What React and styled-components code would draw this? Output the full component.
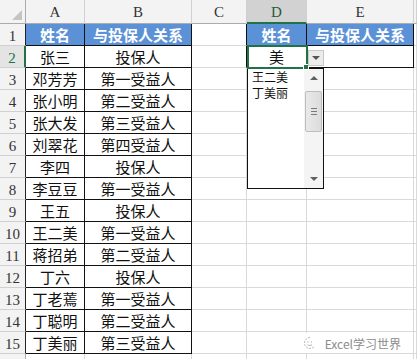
import React from 'react'
import styled, { createGlobalStyle, css } from 'styled-components'

const GlobalStyle = createGlobalStyle`
  html, body {
    margin: 0;
    padding: 0;
    background: #fff;
    overflow: hidden;
  }
  body {
    font-family: "Noto Sans CJK SC", "Liberation Sans", sans-serif;
  }
`

const GRID = '#d9d9d9'
const GREEN = '#217346'
const BLUE = '#5b91d6'

const Sheet = styled.div`
  position: relative;
  display: grid;
  grid-template-columns: 26px 59px 107px 55px 60px 107px 1fr;
  grid-template-rows: 24px repeat(16, 22px);
  width: 417px;
  height: 359px;
  overflow: hidden;
`

const Corner = styled.div`
  position: relative;
  background: #f3f3f3;
  border-right: 1px solid #ababab;
  border-bottom: 1px solid #ababab;
  box-sizing: border-box;

  &::after {
    content: '';
    position: absolute;
    right: 3px;
    bottom: 3px;
    border-style: solid;
    border-width: 0 0 10px 10px;
    border-color: transparent transparent #c4c4c4 transparent;
  }
`

const ColHeader = styled.div`
  display: flex;
  align-items: center;
  justify-content: center;
  box-sizing: border-box;
  background: ${p => (p.$active ? '#d2d2d2' : '#f3f3f3')};
  color: ${p => (p.$active ? '#1d5c3a' : '#333')};
  border-right: 1px solid #d0d0d0;
  border-bottom: ${p => (p.$active ? `2px solid ${GREEN}` : '1px solid #ababab')};
  font-family: "Liberation Serif", "DejaVu Serif", serif;
  font-size: 15px;
  padding-top: 2px;
`

const RowHeader = styled.div`
  display: flex;
  align-items: center;
  justify-content: center;
  box-sizing: border-box;
  background: ${p => (p.$active ? '#e4e4e4' : '#f3f3f3')};
  color: ${p => (p.$active ? GREEN : '#333')};
  border-bottom: 1px solid #d0d0d0;
  border-right: ${p => (p.$active ? `2px solid ${GREEN}` : p.$table ? '1px solid #222' : '1px solid #ababab')};
  font-family: "Liberation Serif", "DejaVu Serif", serif;
  font-size: 15px;
  padding-top: 3px;
`

const Cell = styled.div`
  position: relative;
  display: flex;
  align-items: center;
  justify-content: center;
  box-sizing: border-box;
  font-size: 15px;
  color: #111;
  white-space: nowrap;
  border-right: 1px solid ${p => (p.$black || p.$edge ? '#111' : GRID)};
  border-bottom: 1px solid ${p => (p.$black ? '#111' : GRID)};
  ${p =>
    p.$head &&
    css`
      background: ${BLUE};
      color: #fff;
      font-weight: 700;
    `}
`

const ActiveFrame = styled.div`
  position: absolute;
  left: 0;
  top: -1px;
  width: 61px;
  height: 24px;
  box-sizing: border-box;
  border: 2px solid ${GREEN};
  z-index: 4;
  pointer-events: none;

  &::after {
    content: '';
    position: absolute;
    right: -3px;
    bottom: -3px;
    width: 4px;
    height: 4px;
    background: ${GREEN};
    border: 1px solid #fff;
  }
`

const DropButton = styled.div`
  position: absolute;
  left: 61px;
  top: 4px;
  width: 16px;
  height: 16px;
  box-sizing: border-box;
  background: #ececec;
  border: 1px solid #c8c8c8;
  display: flex;
  align-items: center;
  justify-content: center;
  z-index: 5;

  &::before {
    content: '';
    border-style: solid;
    border-width: 4px 4px 0 4px;
    border-color: #555 transparent transparent transparent;
  }
`

const ListBox = styled.div`
  position: absolute;
  left: 0;
  top: 22px;
  width: 77px;
  height: 121px;
  box-sizing: border-box;
  background: #fff;
  border: 1px solid #111;
  display: flex;
  z-index: 3;
`

const Items = styled.div`
  flex: 1;
  padding: 0 0 0 4px;
  display: flex;
  flex-direction: column;
  align-items: flex-start;
  justify-content: flex-start;
`

const Item = styled.div`
  font-size: 12px;
  line-height: 16px;
  color: #111;
`

const ScrollBar = styled.div`
  width: 19px;
  background: #f4f4f4;
  display: flex;
  flex-direction: column;
  align-items: center;
`

const Arrow = styled.div`
  height: 18px;
  width: 19px;
  display: flex;
  align-items: center;
  justify-content: center;

  &::before {
    content: '';
    border-style: solid;
    border-width: ${p => (p.$down ? '4px 4px 0 4px' : '0 4px 4px 4px')};
    border-color: ${p =>
      p.$down ? '#606060 transparent transparent transparent' : 'transparent transparent #606060 transparent'};
  }
`

const Thumb = styled.div`
  width: 17px;
  height: 41px;
  margin-top: 4px;
  box-sizing: border-box;
  border: 1px solid #bdbdbd;
  border-radius: 2px;
  background: linear-gradient(to right, #e9e9e9, #dcdcdc);
  display: flex;
  flex-direction: column;
  align-items: center;
  justify-content: center;
  gap: 2px;
`

const Grip = styled.span`
  display: block;
  width: 6px;
  height: 1px;
  background: #7a7a7a;
`

const Spacer = styled.div`
  flex: 1;
`

const Watermark = styled.div`
  position: absolute;
  right: 10px;
  bottom: 6px;
  height: 20px;
  padding: 0 6px 0 6px;
  display: flex;
  align-items: center;
  gap: 8px;
  background: rgba(255, 255, 255, 0.9);
  color: #8c8c8c;
  font-size: 12px;
  z-index: 6;
`

const rows = [
  ['姓名', '与投保人关系'],
  ['张三', '投保人'],
  ['邓芳芳', '第一受益人'],
  ['张小明', '第二受益人'],
  ['张大发', '第三受益人'],
  ['刘翠花', '第四受益人'],
  ['李四', '投保人'],
  ['李豆豆', '第一受益人'],
  ['王五', '投保人'],
  ['王二美', '第一受益人'],
  ['蒋招弟', '第二受益人'],
  ['丁六', '投保人'],
  ['丁老蔫', '第一受益人'],
  ['丁聪明', '第二受益人'],
  ['丁美丽', '第三受益人'],
  ['', ''],
]

const WeChatIcon = () => (
  <svg width="14" height="14" viewBox="0 0 14 14" fill="none" stroke="#b5b5b5" strokeWidth="1">
    <path d="M7 1.5a5.5 5.5 0 1 0 3.9 9.4" strokeDasharray="2 1.2" />
    <circle cx="5" cy="6" r="0.7" fill="#b5b5b5" stroke="none" />
    <circle cx="8.5" cy="6" r="0.7" fill="#b5b5b5" stroke="none" />
    <path d="M4.5 8.8q2.3 1.6 4.6 0" />
  </svg>
)

const Dropdown = () => (
  <>
    <ActiveFrame />
    <DropButton />
    <ListBox>
      <Items>
        <Item>王二美</Item>
        <Item>丁美丽</Item>
      </Items>
      <ScrollBar>
        <Arrow />
        <Thumb>
          <Grip />
          <Grip />
          <Grip />
        </Thumb>
        <Spacer />
        <Arrow $down />
      </ScrollBar>
    </ListBox>
  </>
)

export default function App() {
  return (
    <>
      <GlobalStyle />
      <Sheet>
        <Corner />
        <ColHeader>A</ColHeader>
        <ColHeader>B</ColHeader>
        <ColHeader>C</ColHeader>
        <ColHeader $active>D</ColHeader>
        <ColHeader>E</ColHeader>
        <ColHeader />
        {rows.map(([name, rel], i) => {
          const r = i + 1
          const inTable = r <= 15
          const inSide = r <= 2
          return (
            <React.Fragment key={r}>
              <RowHeader $active={r === 2} $table={inTable}>{r <= 15 ? r : ''}</RowHeader>
              <Cell $black={inTable} $head={r === 1}>{name}</Cell>
              <Cell $black={inTable} $head={r === 1}>{rel}</Cell>
              <Cell $edge={inSide} />
              <Cell $black={inSide} $head={r === 1}>
                {r === 1 ? '姓名' : r === 2 ? '美' : ''}
                {r === 2 && <Dropdown />}
              </Cell>
              <Cell $black={inSide} $head={r === 1}>{r === 1 ? '与投保人关系' : ''}</Cell>
              <Cell />
            </React.Fragment>
          )
        })}
        <Watermark>
          <WeChatIcon />
          <span>Excel学习世界</span>
        </Watermark>
      </Sheet>
    </>
  )
}
